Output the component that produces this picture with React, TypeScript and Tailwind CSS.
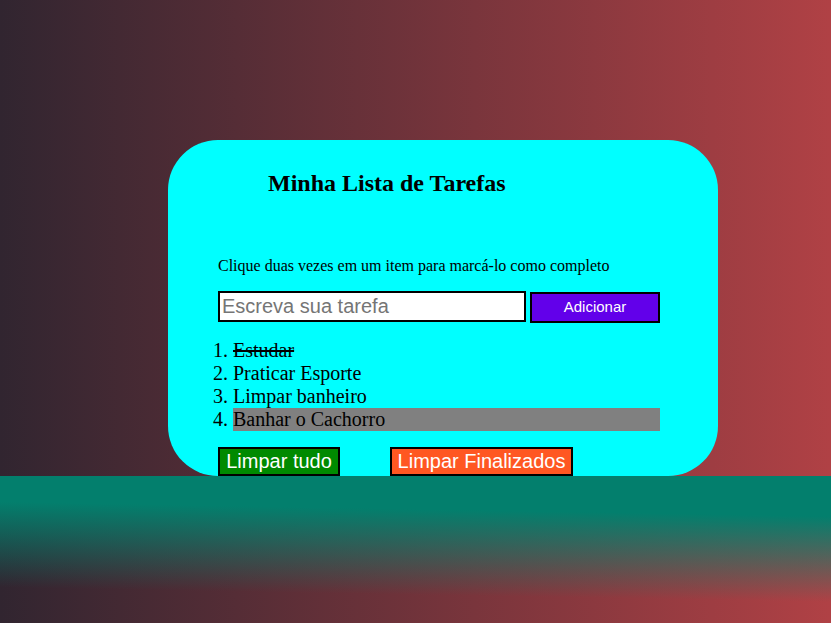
import React from 'react';

const tarefas = [
  { texto: 'Estudar', feito: true, marcado: false },
  { texto: 'Praticar Esporte', feito: false, marcado: false },
  { texto: 'Limpar banheiro', feito: false, marcado: false },
  { texto: 'Banhar o Cachorro', feito: false, marcado: true },
];

const App = () => {
  return (
    <div className="min-h-screen flex flex-col bg-[linear-gradient(to_right,#312530,#b04145)]">
      <div className="pt-[140px]">
        <div className="ml-[168px] w-[550px] h-[336px] rounded-[50px] bg-[#00ffff] pl-[50px] font-['Liberation_Serif',serif] text-black">
          <h2 className="ml-[50px] pt-[29px] text-[24px] leading-[28px] font-bold">Minha Lista de Tarefas</h2>

          <p className="mt-[60px] text-[16px] leading-[18px]">
            Clique duas vezes em um item para marcá-lo como completo
          </p>

          <div className="mt-[16px] flex items-start font-['Liberation_Sans',sans-serif]">
            <input
              type="text"
              placeholder="Escreva sua tarefa"
              className="w-[308px] h-[31px] border-2 border-black bg-white px-[2px] text-[20px] placeholder:text-[#757575] outline-none"
            />
            <button className="ml-[4px] mt-[1px] w-[130px] h-[31px] border-2 border-black bg-[#6200ea] text-white text-[15px]">
              Adicionar
            </button>
          </div>

          <ol className="mt-[16px] w-[442px] list-decimal pl-[15px] text-[20px] leading-[23px]">
            {tarefas.map((t) => (
              <li key={t.texto} className={t.marcado ? 'bg-[#808080]' : ''}>
                <span className={t.feito ? 'line-through' : ''}>{t.texto}</span>
              </li>
            ))}
          </ol>

          <div className="mt-[16px] flex gap-[50px] font-['Liberation_Sans',sans-serif]">
            <button className="w-[122px] h-[29px] flex items-center justify-center border-2 border-black bg-[#008a00] text-white text-[20px] leading-[23px]">
              Limpar tudo
            </button>
            <button className="w-[183px] h-[29px] flex items-center justify-center border-2 border-black bg-[#ff5722] text-white text-[20px] leading-[23px]">
              Limpar Finalizados
            </button>
          </div>
        </div>
      </div>
      <div className="flex-1 bg-[linear-gradient(181deg,#037f6d_25%,transparent_78%)]"></div>
    </div>
  );
};

export default App;
